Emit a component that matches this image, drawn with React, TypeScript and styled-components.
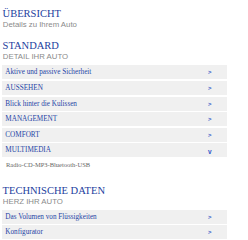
import React from 'react';
import styled, { createGlobalStyle } from 'styled-components';

const GlobalStyle = createGlobalStyle`
  html, body { margin: 0; padding: 0; background: #fff; }
  body { width: 248px; height: 240px; overflow: hidden; }
`;

const Page = styled.div`
  padding: 8.4px 21px 0 2px;
  display: flex;
  flex-direction: column;
`;

const Section = styled.section<{ $gap: number }>`
  display: flex;
  flex-direction: column;
  margin-bottom: ${(p) => p.$gap}px;
`;

const Title = styled.h2`
  margin: 0;
  font-family: 'Liberation Serif', serif;
  font-weight: normal;
  font-size: 10.5px;
  line-height: 12px;
  color: #23409e;
  padding-left: 0.6px;
`;

const Subtitle = styled.div`
  font-family: 'Liberation Sans', sans-serif;
  font-size: 7.8px;
  line-height: 10px;
  color: #8a8a8a;
  padding-left: 0.8px;
`;

const List = styled.div`
  display: flex;
  flex-direction: column;
  gap: 1.6px;
  margin-top: 3px;
`;

const Row = styled.div`
  display: flex;
  align-items: center;
  justify-content: space-between;
  height: 14px;
  background: #f0f0f0;
  padding: 0 15px 0 3.3px;
  font-family: 'Liberation Serif', serif;
  font-size: 7.2px;
  color: #2645a6;
`;

const Chevron = styled.span<{ $open?: boolean }>`
  width: 4px;
  font-family: 'Liberation Sans', sans-serif;
  font-weight: bold;
  font-size: ${(p) => (p.$open ? 6.5 : 6)}px;
  line-height: 1;
  color: #2f55c8;
  transform: translateY(${(p) => (p.$open ? 1.5 : 0)}px);
`;

const Note = styled.div`
  font-family: 'Liberation Serif', serif;
  font-size: 6.5px;
  line-height: 8px;
  color: #666;
  padding: 3.8px 0 0 4px;
`;

type Item = { label: string; open?: boolean };

const standard: Item[] = [
  { label: 'Aktive und passive Sicherheit' },
  { label: 'AUSSEHEN' },
  { label: 'Blick hinter die Kulissen' },
  { label: 'MANAGEMENT' },
  { label: 'COMFORT' },
  { label: 'MULTIMEDIA', open: true },
];

const technik: Item[] = [
  { label: 'Das Volumen von Flüssigkeiten' },
  { label: 'Konfigurator' },
];

const Rows = ({ items }: { items: Item[] }) => (
  <List>
    {items.map((it) => (
      <Row key={it.label}>
        <span>{it.label}</span>
        <Chevron $open={it.open}>{it.open ? 'v' : '>'}</Chevron>
      </Row>
    ))}
  </List>
);

export default function App() {
  return (
    <>
      <GlobalStyle />
      <Page>
        <Section $gap={10}>
          <Title>ÜBERSICHT</Title>
          <Subtitle>Details zu Ihrem Auto</Subtitle>
        </Section>
        <Section $gap={15.5}>
          <Title>STANDARD</Title>
          <Subtitle>DETAIL IHR AUTO</Subtitle>
          <Rows items={standard} />
          <Note>Radio-CD-MP3-Bluetooth-USB</Note>
        </Section>
        <Section $gap={0}>
          <Title>TECHNISCHE DATEN</Title>
          <Subtitle>HERZ IHR AUTO</Subtitle>
          <Rows items={technik} />
        </Section>
      </Page>
    </>
  );
}
